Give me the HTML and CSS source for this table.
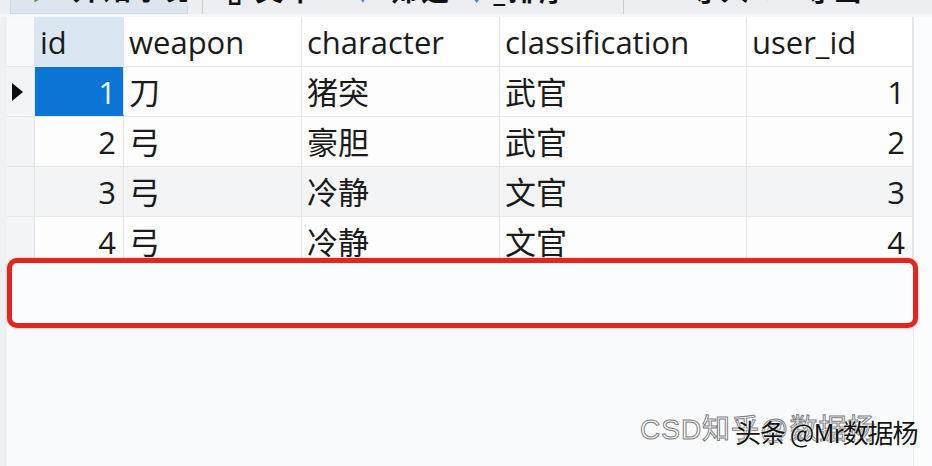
FILE: index.html
```html
<!DOCTYPE html>
<html lang="zh">
<head>
<meta charset="utf-8">
<title>Navicat grid</title>
<link rel="stylesheet" href="styles.css">
</head>
<body>
<div class="app">
  <div class="toolbar">
    <div class="tb-btn"><span class="tb-text"><span class="green">▶</span> 开始事务</span></div>
    <div class="tb-sep"></div>
    <div class="tb-item"><span class="tb-text">▯ 文本 · <span class="blue">▼</span> 筛选 <span class="blue">↓</span>_排序</span></div>
    <div class="tb-sep"></div>
    <div class="tb-item"><span class="tb-text">▫ 导入 <span class="orange">↗</span> 导出</span></div>
  </div>
  <div class="main">
    <div class="strip"></div>
    <div class="grid">
      <div class="row head">
        <div class="c ind"></div>
        <div class="c cid sel-col">id</div>
        <div class="c cw">weapon</div>
        <div class="c cc">character</div>
        <div class="c ccl">classification</div>
        <div class="c cu">user_id</div>
      </div>
      <div class="row">
        <div class="c ind"><span class="tri"></span></div>
        <div class="c cid num cur">1</div>
        <div class="c cw">刀</div>
        <div class="c cc">猪突</div>
        <div class="c ccl">武官</div>
        <div class="c cu num">1</div>
      </div>
      <div class="row">
        <div class="c ind"></div>
        <div class="c cid num">2</div>
        <div class="c cw">弓</div>
        <div class="c cc">豪胆</div>
        <div class="c ccl">武官</div>
        <div class="c cu num">2</div>
      </div>
      <div class="row alt">
        <div class="c ind"></div>
        <div class="c cid num">3</div>
        <div class="c cw">弓</div>
        <div class="c cc">冷静</div>
        <div class="c ccl">文官</div>
        <div class="c cu num">3</div>
      </div>
      <div class="row">
        <div class="c ind"></div>
        <div class="c cid num">4</div>
        <div class="c cw">弓</div>
        <div class="c cc">冷静</div>
        <div class="c ccl">文官</div>
        <div class="c cu num">4</div>
      </div>
      <div class="empty"></div>
    </div>
    <div class="side"></div>
  </div>
  <div class="mark"></div>
  <div class="wm">
    <span class="wm-back">CSD知乎@数据杨</span>
    <span class="wm-front">头条 @Mr数据杨</span>
  </div>
</div>
</body>
</html>
```

FILE: styles.css
```css
* { box-sizing: border-box; }
html, body { margin: 0; padding: 0; }
body {
  width: 932px;
  height: 466px;
  overflow: hidden;
  background: #f9fafc;
  font-family: "Open Sans", "Noto Sans CJK SC", sans-serif;
  color: #1b1b1b;
}
.app {
  position: relative;
  width: 932px;
  height: 466px;
  display: flex;
  flex-direction: column;
}
.toolbar {
  height: 17px;
  flex: none;
  background: #eceef1;
  display: flex;
  align-items: flex-start;
  overflow: hidden;
  padding-left: 10px;
  border-bottom: 3px solid #f6f7f9;
}
.tb-btn {
  width: 178px;
  height: 14px;
  background: #dde6ef;
  border: 1px solid #cfd9e4;
  border-top: none;
  overflow: hidden;
  display: flex;
  align-items: flex-end;
  padding-left: 20px;
}
.tb-item {
  height: 14px;
  overflow: hidden;
  display: flex;
  align-items: flex-end;
  padding-left: 24px;
  padding-right: 20px;
}
.tb-item:nth-of-type(3) { width: 406px; }
.tb-sep {
  width: 1px;
  height: 14px;
  background: #c9ccd1;
  margin-left: 14px;
}
.tb-text {
  font-size: 28px;
  line-height: 28px;
  margin-bottom: 10px;
  white-space: nowrap;
  color: #111;
  letter-spacing: 3px;
  font-weight: 700;
}
.green { color: #35a23a; }
.blue { color: #3a86d8; }
.orange { color: #e7a33c; }

.main {
  flex: 1;
  display: flex;
  min-height: 0;
}
.strip {
  width: 7px;
  flex: none;
  background: #eef0f3;
}
.grid {
  width: 906px;
  flex: none;
  display: flex;
  flex-direction: column;
}
.side {
  flex: 1;
  background: #fbfcfd;
  border-left: 1px solid #e6e8eb;
}
.row {
  display: flex;
  height: 50px;
  flex: none;
  border-bottom: 1px solid #e4e6e9;
  background: #fdfdfe;
}
.row.alt { background: #f3f4f6; }
.row.head { background: #ffffff; height: 50px; }
.c {
  height: 100%;
  border-right: 1px solid #e3e5e8;
  font-size: 31px;
  line-height: 50px;
  padding: 0 5px;
  white-space: nowrap;
  overflow: hidden;
}
.ind {
  width: 28px;
  background: #f3f4f6;
  display: flex;
  align-items: center;
  justify-content: center;
  padding: 0;
}
.head .ind { background: #f8f9fa; }
.cid { width: 89px; }
.cw { width: 178px; }
.cc { width: 198px; }
.ccl { width: 247px; }
.cu { width: 166px; }
.num { text-align: right; padding-right: 7px; }
.sel-col { background: #dbe6f3; }
.cur {
  background: #0b75d5;
  color: #eef5fc;
  border-bottom: 2px solid #0b75d5;
}
.tri {
  width: 0;
  height: 0;
  border-top: 9px solid transparent;
  border-bottom: 9px solid transparent;
  border-left: 11px solid #0d0d0d;
  margin-left: -6px;
}
.empty {
  flex: 1;
  background: #f9fafc;
}
.mark {
  position: absolute;
  left: 7px;
  top: 258px;
  width: 911px;
  height: 70px;
  border: 5px solid #e3261c;
  border-radius: 10px;
  background: #fbfcfe;
  box-shadow: 0 0 2px rgba(227, 38, 28, 0.5);
}
.wm {
  position: absolute;
  left: 640px;
  top: 410px;
  height: 40px;
  width: 290px;
}
.wm-back {
  position: absolute;
  left: 0;
  top: 0;
  font-family: "Liberation Sans", "Noto Sans CJK SC", sans-serif;
  font-size: 28px;
  line-height: 40px;
  color: #ffffff;
  -webkit-text-stroke: 1px #7e7e84;
  letter-spacing: 1px;
  white-space: nowrap;
}
.wm-front {
  position: absolute;
  left: 95px;
  top: 2px;
  font-family: "Noto Sans CJK SC", sans-serif;
  font-size: 26px;
  line-height: 40px;
  color: #141414;
  text-shadow: 0 0 2px #ffffff, 0 0 1px #ffffff;
  white-space: nowrap;
  letter-spacing: -1px;
}
```
